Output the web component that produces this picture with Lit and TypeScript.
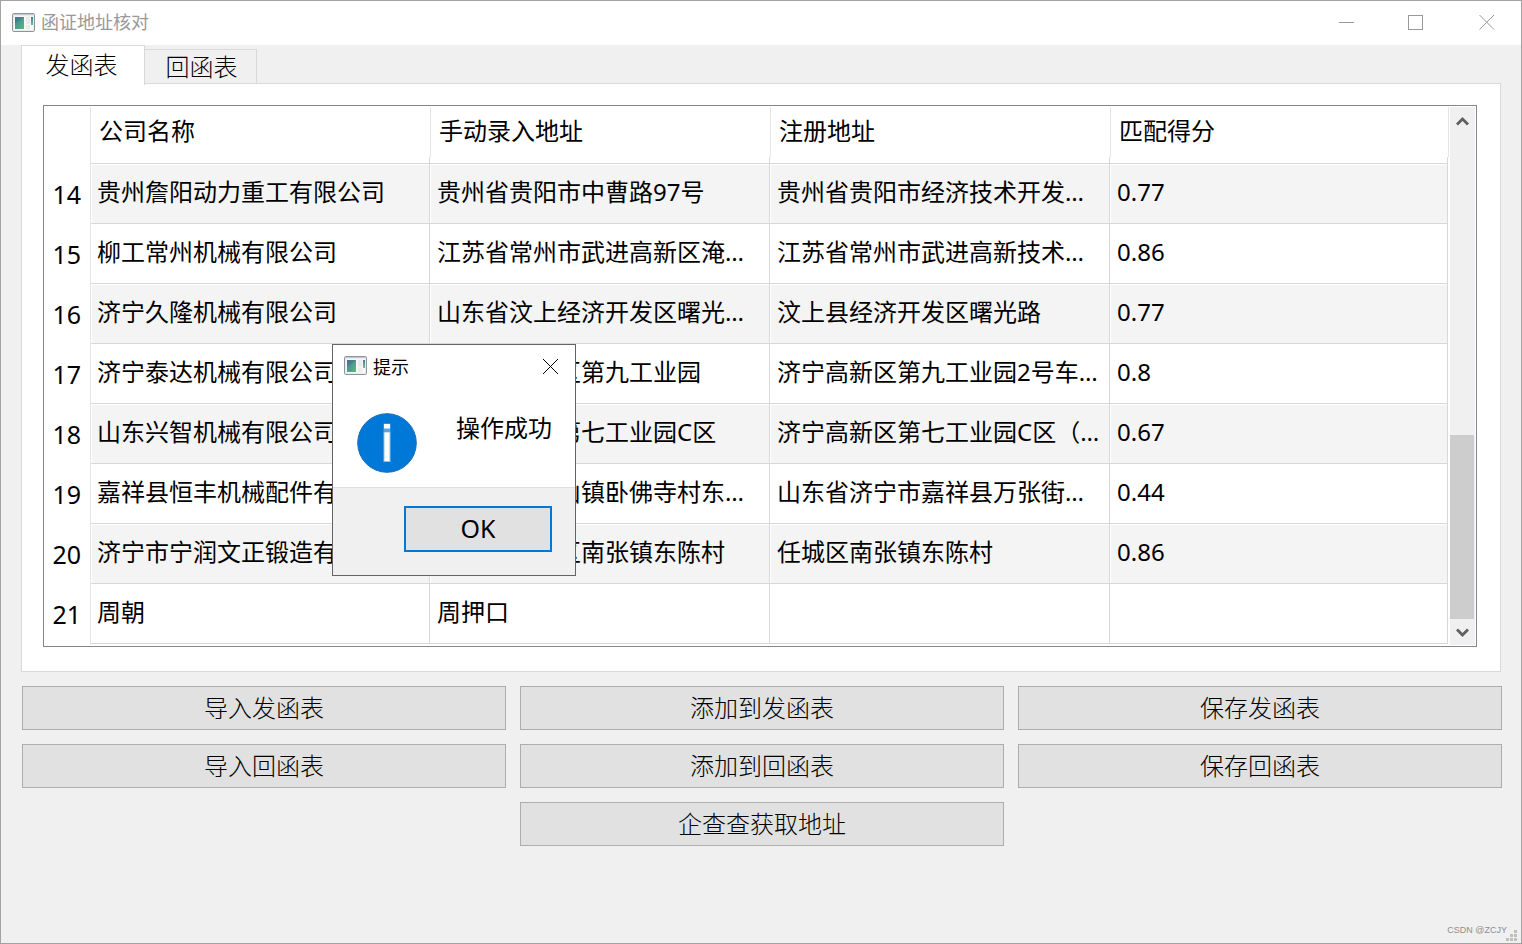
import { LitElement, html, css, svg } from "lit";
import { customElement, property } from "lit/decorators.js";

const ROWS: string[][] = [
  ["14", "贵州詹阳动力重工有限公司", "贵州省贵阳市中曹路97号", "贵州省贵阳市经济技术开发…", "0.77"],
  ["15", "柳工常州机械有限公司", "江苏省常州市武进高新区淹…", "江苏省常州市武进高新技术…", "0.86"],
  ["16", "济宁久隆机械有限公司", "山东省汶上经济开发区曙光…", "汶上县经济开发区曙光路", "0.77"],
  ["17", "济宁泰达机械有限公司", "济宁市高新区第九工业园", "济宁高新区第九工业园2号车…", "0.8"],
  ["18", "山东兴智机械有限公司", "济宁高新区第七工业园C区", "济宁高新区第七工业园C区（…", "0.67"],
  ["19", "嘉祥县恒丰机械配件有…", "嘉祥县卧龙山镇卧佛寺村东…", "山东省济宁市嘉祥县万张街…", "0.44"],
  ["20", "济宁市宁润文正锻造有…", "济宁市任城区南张镇东陈村", "任城区南张镇东陈村", "0.86"],
  ["21", "周朝", "周押口", "", ""],
];
const HEADS = ["公司名称", "手动录入地址", "注册地址", "匹配得分"];
const ACTIONS = ["导入发函表", "添加到发函表", "保存发函表", "导入回函表", "添加到回函表", "保存回函表"];

@customElement("app-icon")
export class AppIcon extends LitElement {
  static styles = css`
    :host { display: block; width: 23px; height: 19px; }
    svg { display: block; }
  `;
  render() {
    return html`<svg width="23" height="19" viewBox="0 0 23 19">
      <defs>
        <linearGradient id="g" x1="0" y1="0" x2="1" y2="1">
          <stop offset="0" stop-color="#3f7fa0" /><stop offset="1" stop-color="#62b878" />
        </linearGradient>
        <linearGradient id="h" x1="0" y1="0" x2="0" y2="1">
          <stop offset="0" stop-color="#4379ad" /><stop offset="1" stop-color="#6cc08a" />
        </linearGradient>
      </defs>
      <rect x="0.5" y="0.5" width="22" height="18" rx="1.2" fill="#e9ebed" stroke="#8d959c" />
      <path d="M1 1.5H22" stroke="#c3c9ce" />
      <rect x="2" y="3" width="19" height="14" fill="#f7f7f7" />
      <rect x="3" y="4" width="9" height="12" fill="url(#g)" />
      <path d="M3 10Q8 8 12 4V4H3Z" fill="#2f6b86" opacity=".35" />
      <rect x="14" y="4" width="4" height="7" fill="#ebebeb" />
      <rect x="14" y="12" width="4" height="4" fill="#ebebeb" />
      <rect x="19" y="4" width="2" height="8" fill="url(#h)" />
    </svg>`;
  }
}

@customElement("push-button")
export class PushButton extends LitElement {
  @property() label = "";
  static styles = css`
    :host { display: block; height: 44px; }
    .btn {
      box-sizing: border-box; width: 100%; height: 100%; margin: 0; padding: 0 0 2px;
      display: flex; align-items: center; justify-content: center;
      background: #e1e1e1; border: 1px solid #adadad; border-radius: 0; color: #000;
      font: 300 24px/24px "Noto Sans CJK SC", sans-serif;
    }
  `;
  render() {
    return html`<button class="btn">${this.label}</button>`;
  }
}

@customElement("message-box")
export class MessageBox extends LitElement {
  static styles = css`
    :host { display: block; box-sizing: border-box; width: 244px; height: 232px; border: 1px solid #646464; background: #fff;
      font-family: "Noto Sans", "Noto Sans CJK SC", sans-serif; color: #000; }
    .bar { display: flex; align-items: center; height: 42px; padding: 0 16px 0 11px; }
    app-icon { margin-bottom: 1px; }
    .name { flex: 1; font-size: 18px; line-height: 24px; padding: 2px 0 0 6px; }
    .bar svg { display: block; margin-top: 1px; }
    .body { display: flex; height: 101px; box-sizing: border-box; padding: 26px 0 0 24px; border-bottom: 1px solid #dfdfdf; }
    .body svg { display: block; }
    .msg { font-size: 24px; line-height: 32px; margin: -1px 0 0 39px; }
    .foot { display: flex; justify-content: flex-end; height: 87px; box-sizing: border-box; padding: 18px 23px 0 0; background: #f0f0f0; }
    .ok { box-sizing: border-box; width: 148px; height: 46px; padding: 0 0 2px; border: 2px solid #0078d7; background: #e1e1e1;
      color: #000; font: 25px/30px "Noto Sans", sans-serif; }
  `;
  render() {
    return html`
      <div class="bar">
        <app-icon></app-icon><span class="name">提示</span>
        <svg width="16" height="16" viewBox="0 0 16 16"><path d="M0 0L15 15M15 0L0 15" stroke="#000" fill="none" /></svg>
      </div>
      <div class="body">
        <svg width="60" height="60" viewBox="0 0 60 60">
          <circle cx="30" cy="30" r="29.3" fill="#0078d7" stroke="#1a6db5" />
          <rect x="26.5" y="10.5" width="7" height="9" fill="#55a5e5" />
          <rect x="27" y="11" width="6" height="4.5" fill="#fff" />
          <rect x="26.5" y="19" width="7" height="30" fill="#8cc2ee" />
          <rect x="27.5" y="19.5" width="5" height="28.5" fill="#fff" />
        </svg>
        <span class="msg">操作成功</span>
      </div>
      <div class="foot"><button class="ok">OK</button></div>`;
  }
}

@customElement("app-root")
export class AppRoot extends LitElement {
  static styles = css`
    :host { display: block; position: relative; box-sizing: border-box; width: 1522px; height: 944px; overflow: hidden;
      background: #f0f0f0; border: 1px solid #a3a3a3; color: #000;
      font-family: "Noto Sans", "Noto Sans CJK SC", sans-serif; }
    .edge { position: absolute; top: 0; width: 1px; height: 942px; }
    .title { display: flex; align-items: center; height: 44px; background: #fff; padding: 0 26px 3px 11px; box-sizing: border-box; }
    .title app-icon { margin-top: 1px; }
    .title .name { flex: 1; padding: 0 0 0 6px; font-size: 18px; line-height: 24px; color: #999; }
    .controls { display: flex; gap: 54px; }
    .controls svg { display: block; }
    .tabs { display: flex; height: 38px; padding-left: 20px; align-items: flex-end; font: 300 24px/32px "Noto Sans CJK SC", sans-serif; }
    .tab { box-sizing: border-box; text-align: center; white-space: nowrap; }
    .tab.on { position: relative; z-index: 1; width: 124px; height: 40px; margin-bottom: -2px; background: #fff;
      border: 1px solid #d9d9d9; border-bottom: 0; padding: 2px 3px 0 0; }
    .tab.off { width: 112px; height: 34px; border: 1px solid #d9d9d9; border-left: 0; border-bottom: 0; padding-left: 2px; }
    .pane { box-sizing: border-box; width: 1480px; height: 589px; margin-left: 20px; background: #fff; border: 1px solid #d9d9d9; padding: 21px; }
    .frame { box-sizing: border-box; display: flex; width: 1434px; height: 542px; border: 1px solid #828790; padding: 1px; background: #fff; }
    .grid { width: 1405px; height: 538px; }
    .line { display: grid; grid-template-columns: 46px 339px 340px 340px 338px; grid-template-rows: 60px; height: 60px; }
    .line.head { grid-template-rows: 57px; height: 57px; }
    .num { box-sizing: border-box; border-right: 1px solid #e5e5e5; font-size: 25px; line-height: 60px; text-align: right; padding-right: 9px; }
    .line:last-child .num { height: 61px; }
    .h { box-sizing: border-box; position: relative; border-bottom: 1px solid #d8d8d8; font-size: 24px; line-height: 48px; padding-left: 8px; white-space: nowrap; }
    .h::after { content: ""; position: absolute; right: -1px; top: 0; height: 50px; border-right: 1px solid #e5e5e5; }
    .h::before { content: ""; position: absolute; right: 0; top: 50px; height: 7px; border-right: 1px solid #d8d8d8; }
    .h + .h { padding-left: 9px; }
    .cell { box-sizing: border-box; border-right: 1px solid #d8d8d8; border-bottom: 1px solid #d8d8d8; font-size: 24px; line-height: 56px;
      padding-left: 7px; white-space: nowrap; overflow: hidden; }
    .num + .cell { padding-left: 6px; }
    .alt .cell { background: #f4f4f4; box-shadow: inset 1px 1px #fff; }
    .scroll { display: flex; flex-direction: column; justify-content: space-between; width: 25px; height: 538px; background: #f0f0f0; margin-left: 1px; }
    .scroll svg { display: block; }
    .thumb { width: 24px; height: 184px; margin-top: auto; background: #cdcdcd; }
    .actions { display: grid; grid-template-columns: repeat(3, 484px); gap: 14px; padding: 14px 0 0 21px; }
    .wide { grid-column: 2; }
    .dialog { position: absolute; left: 331px; top: 343px; }
    .mark { position: absolute; right: 14px; bottom: 6px; font: 9px/14px "Liberation Sans", sans-serif; color: #8e8e8e; }
    .grip { position: absolute; right: 3px; bottom: 1px; display: block; }
  `;

  private row(r: string[], i: number) {
    return html`<div class="line ${i % 2 ? "" : "alt"}">
      <div class="num">${r[0]}</div>${r.slice(1).map((c) => html`<div class="cell">${c}</div>`)}
    </div>`;
  }

  render() {
    return html`
      <div class="title">
        <app-icon></app-icon><span class="name">函证地址核对</span>
        <div class="controls">
          <svg width="16" height="16" viewBox="0 0 16 16"><path d="M0 8.5H15" stroke="#999" /></svg>
          <svg width="16" height="16" viewBox="0 0 16 16" overflow="visible"><rect x="-0.5" y="1.5" width="14" height="14" fill="none" stroke="#999" /></svg>
          <svg width="16" height="16" viewBox="0 0 16 16"><path d="M0.5 1L15 15.5M15 1L0.5 15.5" stroke="#999" /></svg>
        </div>
      </div>
      <div class="tabs"><div class="tab on">发函表</div><div class="tab off">回函表</div></div>
      <div class="pane">
        <div class="frame">
          <div class="grid">
            <div class="line head"><div class="num"></div>${HEADS.map((h) => html`<div class="h">${h}</div>`)}</div>
            ${ROWS.map((r, i) => this.row(r, i))}
          </div>
          <div class="scroll">
            <svg width="25" height="26" viewBox="0 0 25 26"><path d="M7 17.5L12.5 12L18 17.5" fill="none" stroke="#606060" stroke-width="2.8" /></svg>
            <div class="thumb"></div>
            <svg width="25" height="26" viewBox="0 0 25 26"><path d="M7 10.5L12.5 16L18 10.5" fill="none" stroke="#606060" stroke-width="2.8" /></svg>
          </div>
        </div>
      </div>
      <div class="actions">
        ${ACTIONS.map((a) => html`<push-button label=${a}></push-button>`)}
        <push-button class="wide" label="企查查获取地址"></push-button>
      </div>
      <message-box class="dialog"></message-box>
      <span class="mark">CSDN @ZCJY</span>
      <svg class="grip" width="12" height="12" viewBox="0 0 12 12">
        ${[[8, 0], [4, 4], [8, 4], [0, 8], [4, 8], [8, 8]].map(([x, y]) => svg`<rect x=${x} y=${y} width="3" height="3" fill="#bfbfbf" />`)}
      </svg>`;
  }
}
